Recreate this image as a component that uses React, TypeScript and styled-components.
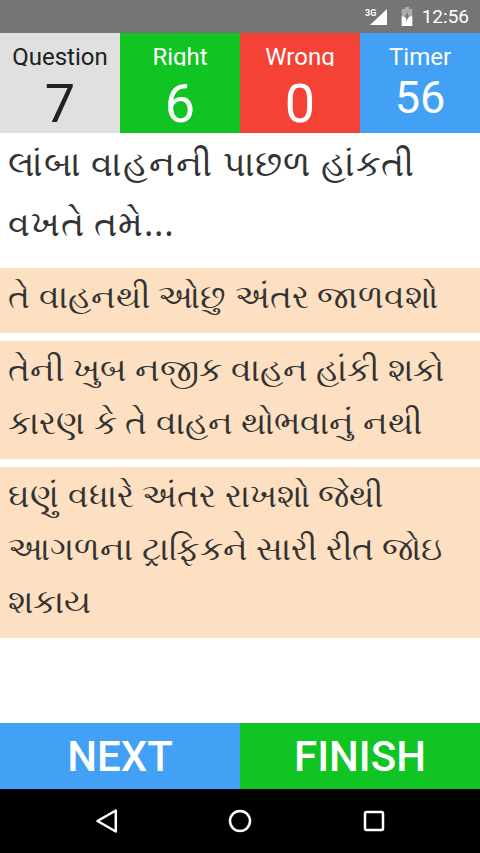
import React from "react";
import styled, { createGlobalStyle } from "styled-components";

const GlobalStyle = createGlobalStyle`
  html, body { margin: 0; padding: 0; background: #fff; }
  body { font-family: Roboto, "Noto Sans", sans-serif; }
`;

const stats = [
  { label: "Question", value: "7", bg: "#e0e0e0", fg: "#212121", small: false },
  { label: "Right", value: "6", bg: "#0fc423", fg: "#fff", small: false },
  { label: "Wrong", value: "0", bg: "#f44336", fg: "#fff", small: false },
  { label: "Timer", value: "56", bg: "#42a0f5", fg: "#fff", small: true },
];

const answers = [
  "તે વાહનથી ઓછુ અંતર જાળવશો",
  "તેની ખુબ નજીક વાહન હાંકી શકો કારણ કે તે વાહન થોભવાનું નથી",
  "ઘણું વધારે અંતર રાખશો જેથી આગળના ટ્રાફિકને સારી રીત જોઇ શકાય",
];

export default function App() {
  return (
    <Screen>
      <GlobalStyle />
      <StatusBar>
        <NetIcon viewBox="0 0 24 20">
          <text x="0" y="8.500" fontSize="9" fontWeight="700" fontFamily="Roboto" fill="#fff">3G</text>
          <path d="M22 2v16H5z" fill="#fff" />
        </NetIcon>
        <BatteryIcon viewBox="0 0 12 18">
          <path d="M4 0h4v2h3v16H1V2h3z" fill="#fff" opacity="0.4" />
          <path d="M1 9h10v9H1z" fill="#fff" />
          <path d="M7 4L3.500 10h2L4.500 14.500 8.500 8H6.500z" fill="#757575" />
        </BatteryIcon>
        <Clock>12:56</Clock>
      </StatusBar>
      <Stats>
        {stats.map((s) => (
          <Stat key={s.label} $bg={s.bg} $fg={s.fg}>
            <StatLabel>{s.label}</StatLabel>
            <StatValue $small={s.small}>{s.value}</StatValue>
          </Stat>
        ))}
      </Stats>
      <Question>લાંબા વાહનની પાછળ હાંકતી વખતે તમે...</Question>
      <Answers>
        {answers.map((a) => (
          <Answer key={a}>{a}</Answer>
        ))}
      </Answers>
      <Actions>
        <Action $bg="#42a0f5">NEXT</Action>
        <Action $bg="#0fc423">FINISH</Action>
      </Actions>
      <NavBar>
        <NavIcon viewBox="0 0 32 32">
          <path d="M25.800 5.500v21L7.500 16z" fill="none" stroke="#fff" strokeWidth="2.500" strokeLinejoin="round" />
        </NavIcon>
        <NavIcon viewBox="0 0 32 32">
          <circle cx="16" cy="16" r="10" fill="none" stroke="#fff" strokeWidth="2.500" />
        </NavIcon>
        <NavIcon viewBox="0 0 32 32">
          <rect x="7" y="7" width="18" height="18" rx="1.500" fill="none" stroke="#fff" strokeWidth="2.500" />
        </NavIcon>
      </NavBar>
    </Screen>
  );
}

const Screen = styled.div`
  width: 480px;
  height: 853px;
  display: flex;
  flex-direction: column;
  overflow: hidden;
  background: #fff;
`;

const StatusBar = styled.div`
  height: 33px;
  flex: none;
  display: flex;
  align-items: center;
  justify-content: flex-end;
  padding-right: 11px;
  box-sizing: border-box;
  background: #757575;
`;

const NetIcon = styled.svg`
  width: 24px;
  height: 20px;
  margin-right: 11px;
`;

const BatteryIcon = styled.svg`
  width: 14px;
  height: 19px;
  margin-right: 8px;
`;

const Clock = styled.span`
  color: #fff;
  font-size: 19px;
`;

const Stats = styled.div`
  height: 100px;
  flex: none;
  display: grid;
  grid-template-columns: repeat(4, 1fr);
`;

const Stat = styled.div<{ $bg: string; $fg: string }>`
  background: ${(p) => p.$bg};
  color: ${(p) => p.$fg};
  display: flex;
  flex-direction: column;
  align-items: center;
  overflow: hidden;
`;

const StatLabel = styled.div`
  flex: none;
  font-size: 24px;
  line-height: 28px;
  height: 23px;
  margin-top: 10px;
  overflow: hidden;
`;

const StatValue = styled.div<{ $small: boolean }>`
  flex: none;
  font-size: ${(p) => (p.$small ? 45 : 54)}px;
  line-height: 50px;
  padding-top: ${(p) => (p.$small ? 7 : 13)}px;
`;

const Question = styled.div`
  font-family: "Noto Sans", Roboto, sans-serif;
  font-size: 35px;
  line-height: 60px;
  letter-spacing: 0.8px;
  padding: 0 8px;
  color: #333;
`;

const Answers = styled.div`
  margin-top: 15px;
  display: flex;
  flex-direction: column;
  gap: 8px;
  flex: 1;
`;

const Answer = styled.div`
  background: #fde0c2;
  font-family: "Noto Sans", Roboto, sans-serif;
  font-size: 33px;
  line-height: 53px;
  padding: 1px 8px 11px;
  color: #333;
`;

const Actions = styled.div`
  height: 66px;
  flex: none;
  display: grid;
  grid-template-columns: 1fr 1fr;
`;

const Action = styled.div<{ $bg: string }>`
  background: ${(p) => p.$bg};
  color: #fff;
  font-size: 42px;
  font-weight: 500;
  display: flex;
  align-items: center;
  justify-content: center;
`;

const NavBar = styled.div`
  height: 64px;
  flex: none;
  background: #000;
  display: grid;
  grid-template-columns: repeat(3, 134px);
  justify-content: center;
  justify-items: center;
  align-items: center;
`;

const NavIcon = styled.svg`
  width: 32px;
  height: 32px;
`;
